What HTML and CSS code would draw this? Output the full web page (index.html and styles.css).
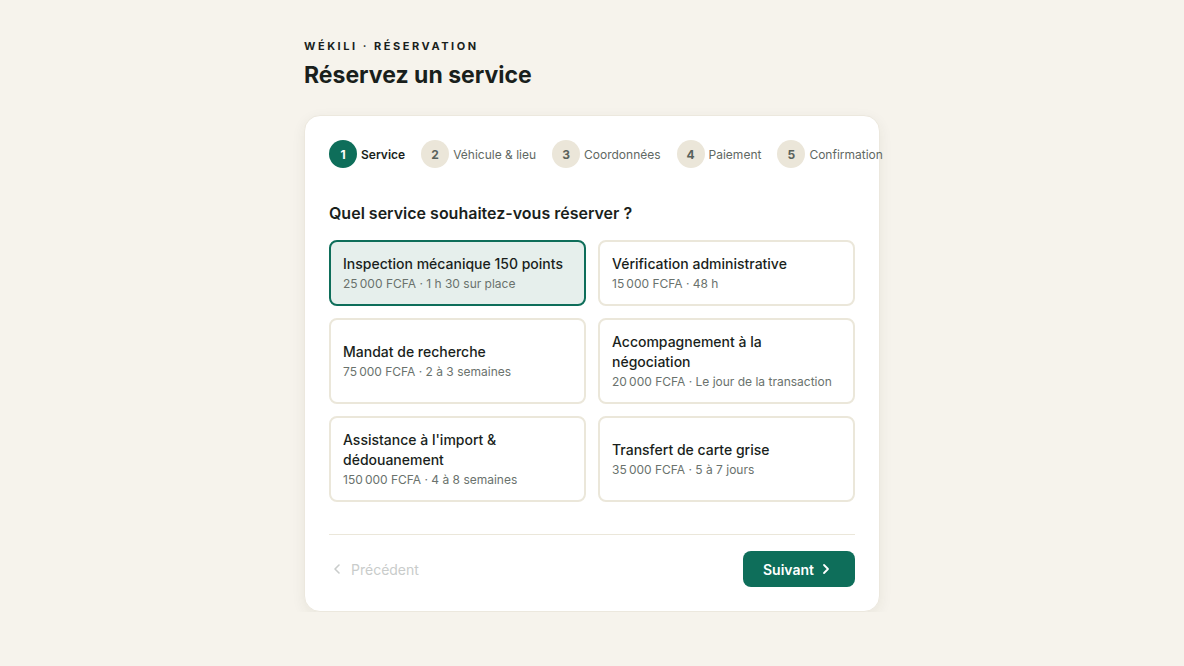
FILE: index.html
```html
<!DOCTYPE html>
<html lang="fr">
<head>
<meta charset="utf-8">
<title>Réservez un service</title>
<link rel="stylesheet" href="styles.css">
</head>
<body>
<main class="page">
  <header class="head">
    <div class="eyebrow">WÉKILI · RÉSERVATION</div>
    <h1 class="title">Réservez un service</h1>
  </header>
  <section class="card">
    <ol class="steps">
      <li class="step active"><span class="num">1</span><span class="lbl">Service</span></li>
      <li class="step"><span class="num">2</span><span class="lbl">Véhicule &amp; lieu</span></li>
      <li class="step"><span class="num">3</span><span class="lbl">Coordonnées</span></li>
      <li class="step"><span class="num">4</span><span class="lbl">Paiement</span></li>
      <li class="step"><span class="num">5</span><span class="lbl">Confirmation</span></li>
    </ol>
    <h2 class="question">Quel service souhaitez-vous réserver ?</h2>
    <div class="options">
      <button class="opt selected"><span class="opt-t">Inspection mécanique 150 points</span><span class="opt-s">25&#8239;000 FCFA · 1 h 30 sur place</span></button>
      <button class="opt"><span class="opt-t">Vérification administrative</span><span class="opt-s">15&#8239;000 FCFA · 48 h</span></button>
      <button class="opt"><span class="opt-t">Mandat de recherche</span><span class="opt-s">75&#8239;000 FCFA · 2 à 3 semaines</span></button>
      <button class="opt"><span class="opt-t">Accompagnement à la négociation</span><span class="opt-s">20&#8239;000 FCFA · Le jour de la transaction</span></button>
      <button class="opt"><span class="opt-t">Assistance à l'import &amp; dédouanement</span><span class="opt-s">150&#8239;000 FCFA · 4 à 8 semaines</span></button>
      <button class="opt"><span class="opt-t">Transfert de carte grise</span><span class="opt-s">35&#8239;000 FCFA · 5 à 7 jours</span></button>
    </div>
    <footer class="actions">
      <button class="btn prev"><svg width="16" height="16" viewBox="0 0 16 16"><path d="M10 4 6 8l4 4" fill="none" stroke="currentColor" stroke-width="1.6" stroke-linecap="round" stroke-linejoin="round"/></svg>Précédent</button>
      <button class="btn next">Suivant<svg width="16" height="16" viewBox="0 0 16 16"><path d="M6 4l4 4-4 4" fill="none" stroke="currentColor" stroke-width="1.8" stroke-linecap="round" stroke-linejoin="round"/></svg></button>
    </footer>
  </section>
</main>
</body>
</html>
```

FILE: styles.css
```css
* { box-sizing: border-box; }
html, body { margin: 0; padding: 0; }
body {
  background: #f6f3ec;
  font-family: Inter, "Noto Sans", sans-serif;
  color: #1a1f1c;
}
.page {
  width: 576px;
  margin: 0 auto;
  padding-top: 39px;
}
.head { margin-bottom: 26px; }
.eyebrow {
  font-size: 11px;
  font-weight: 700;
  letter-spacing: 0.23em;
  line-height: 14px;
  color: #1a1f1c;
}
.title {
  margin: 8px 0 0;
  font-size: 23px;
  font-weight: 700;
  line-height: 28px;
  letter-spacing: 0;
}
.card {
  background: #fff;
  border: 1px solid #ece8de;
  border-radius: 16px;
  padding: 24px 24px 24px;
  box-shadow: 0 4px 14px rgba(60, 50, 30, 0.07);
}
.steps {
  list-style: none;
  margin: 0;
  padding: 0;
  display: flex;
  gap: 16px;
  white-space: nowrap;
}
.step {
  display: flex;
  align-items: center;
  gap: 4px;
  font-size: 12px;
  color: #5f6863;
}
.num {
  width: 28px;
  height: 28px;
  border-radius: 50%;
  background: #ebe6d9;
  color: #59625c;
  display: flex;
  align-items: center;
  justify-content: center;
  font-size: 12px;
  font-weight: 700;
}
.step.active .num { background: #0e6e5a; color: #fff; }
.step.active .lbl { color: #1a1f1c; font-weight: 600; }
.question {
  margin: 34px 0 16px;
  font-size: 16px;
  font-weight: 600;
  line-height: 22px;
}
.options {
  display: grid;
  grid-template-columns: 1fr 1fr;
  gap: 12px 12px;
}
.opt {
  font-family: inherit;
  text-align: left;
  background: #fff;
  border: 2px solid #ebe7da;
  border-radius: 8px;
  padding: 12px 12px 11px;
  display: flex;
  flex-direction: column;
  justify-content: center;
  min-height: 66px;
  cursor: pointer;
}
.opt.selected { background: #e6efec; border-color: #0e6e5a; }
.opt-t {
  font-size: 14px;
  font-weight: 500;
  line-height: 20px;
  color: #1a1f1c;
}
.opt-s {
  font-size: 12px;
  line-height: 18px;
  margin-top: 1px;
  color: #6a726d;
}
.actions {
  margin-top: 32px;
  border-top: 1px solid #ebe7da;
  padding-top: 16px;
  display: flex;
  justify-content: space-between;
  align-items: center;
}
.btn {
  font-family: inherit;
  font-size: 14px;
  border: none;
  display: flex;
  align-items: center;
  cursor: pointer;
  height: 36px;
  border-radius: 8px;
}
.prev {
  background: transparent;
  color: #c9cccb;
  padding: 0;
  gap: 6px;
}
.next {
  background: #0e6e5a;
  color: #fff;
  font-weight: 600;
  padding: 0 21px 0 20px;
  gap: 4px;
}
```
